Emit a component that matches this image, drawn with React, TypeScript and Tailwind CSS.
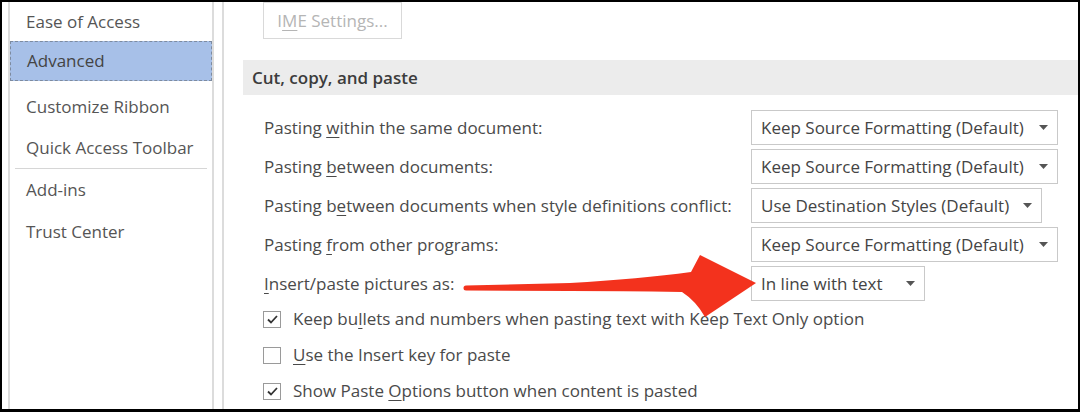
import React from "react";

const font = { fontFamily: '"Open Sans", "Noto Sans", sans-serif' };

const navTop = [
  { name: "Ease of Access", h: "h-[39px]" },
  { name: "Advanced", h: "h-[40px]", active: true },
];

const navMid = ["Customize Ribbon", "Quick Access Toolbar"];
const navBottom = ["Add-ins", "Trust Center"];

const U = ({ children }: { children: React.ReactNode }) => (
  <span className="underline underline-offset-[3px] decoration-1">{children}</span>
);

const Dropdown = ({ value, width }: { value: string; width: string }) => (
  <div
    className={`${width} h-[35px] border border-[#c9c9c9] bg-white flex items-center justify-between pl-[9px] pr-[9px]`}
  >
    <span className="text-[#444] whitespace-nowrap">{value}</span>
    <svg width="9" height="5" viewBox="0 0 9 5">
      <path d="M0 0 L9 0 L4.5 5 Z" fill="#555" />
    </svg>
  </div>
);

const Checkbox = ({ checked }: { checked: boolean }) => (
  <div className="w-[18px] h-[17px] border border-[#9a9a9a] bg-white flex items-center justify-center shrink-0">
    {checked && (
      <svg width="11" height="9" viewBox="0 0 11 9">
        <path d="M1 4.5 L4 7.5 L10 1" fill="none" stroke="#333" strokeWidth="1.8" />
      </svg>
    )}
  </div>
);

const rows: { label: React.ReactNode; value: string; width: string }[] = [
  {
    label: (
      <>
        Pasting <U>w</U>ithin the same document:
      </>
    ),
    value: "Keep Source Formatting (Default)",
    width: "w-[307px]",
  },
  {
    label: (
      <>
        Pasting <U>b</U>etween documents:
      </>
    ),
    value: "Keep Source Formatting (Default)",
    width: "w-[307px]",
  },
  {
    label: (
      <>
        Pasting b<U>e</U>tween documents when style definitions conflict:
      </>
    ),
    value: "Use Destination Styles (Default)",
    width: "w-[291px]",
  },
  {
    label: (
      <>
        Pasting <U>f</U>rom other programs:
      </>
    ),
    value: "Keep Source Formatting (Default)",
    width: "w-[307px]",
  },
  {
    label: (
      <>
        <U>I</U>nsert/paste pictures as:
      </>
    ),
    value: "In line with text",
    width: "w-[174px]",
  },
];

const checks: { label: React.ReactNode; checked: boolean }[] = [
  {
    label: (
      <>
        Keep bu<U>l</U>lets and numbers when pasting text with Keep Text Only option
      </>
    ),
    checked: true,
  },
  {
    label: (
      <>
        <U>U</U>se the Insert key for paste
      </>
    ),
    checked: false,
  },
  {
    label: (
      <>
        Show Paste <U>O</U>ptions button when content is pasted
      </>
    ),
    checked: true,
  },
];

export default function App() {
  return (
    <div className="relative w-[1080px] h-[412px] overflow-hidden text-[17px]" style={font}>
      <div className="h-full border-t-2 border-l-2 border-r-2 border-b-[3px] border-black bg-white flex">
        {/* Nav */}
        <div className="ml-[6px] w-[206px] border-l-2 border-r-2 border-[#dcdcdc] flex flex-col text-[#555]">
          {navTop.map((item) => (
            <div
              key={item.name}
              className={`${item.h} flex items-center pl-[16px] ${
                item.active ? "bg-[#a7c0e8] border border-dashed border-[#7d8ba0] pl-[15px] text-[#444]" : ""
              }`}
            >
              {item.name}
            </div>
          ))}
          <div className="h-[5px]" />
          {navMid.map((name) => (
            <div key={name} className="h-[41px] flex items-center pl-[16px]">
              {name}
            </div>
          ))}
          <div className="h-px bg-[#d6d6d6] mx-[5px]" />
          {navBottom.map((name) => (
            <div key={name} className="h-[42px] flex items-center pl-[16px]">
              {name}
            </div>
          ))}
        </div>

        {/* Content */}
        <div className="ml-[8px] flex-1 border-l-2 border-[#dcdcdc] pl-[19px] flex flex-col">
          <div className="ml-[20px] w-[139px] h-[38px] border border-[#d9d9d9] flex items-center justify-center text-[#b5b5b5]">
            I<U>M</U>E Settings...
          </div>

          <div className="mt-[21px] h-[37px] bg-[#ececec] flex items-center pl-[9px] font-semibold text-[#3c3c3c]">
            Cut, copy, and paste
          </div>

          <div className="mt-[15px] pl-[21px] flex flex-col gap-[4px] text-[#4a4a4a]">
            {rows.map((r, i) => (
              <div key={i} className="flex items-center">
                <div className="w-[487px] whitespace-nowrap">{r.label}</div>
                <Dropdown value={r.value} width={r.width} />
              </div>
            ))}
          </div>

          <div className="pl-[20px] flex flex-col text-[#4a4a4a]">
            {checks.map((c, i) => (
              <div key={i} className="h-[36px] flex items-center gap-[12px]">
                <Checkbox checked={c.checked} />
                <span className="whitespace-nowrap">{c.label}</span>
              </div>
            ))}
          </div>
        </div>
      </div>

      {/* Red annotation arrow */}
      <svg
        className="absolute inset-0 pointer-events-none"
        width="1080"
        height="412"
        viewBox="0 0 1080 412"
      >
        <path
          d="M 466 285.5 L 570 283 Q 640 279 691 272 L 700 255 L 756 283 L 705 317 Q 696 301 682 292 Q 620 291 570 291 L 466 290.5 A 2.5 2.5 0 0 1 466 285.5 Z"
          fill="#f3321d"
        />
      </svg>
    </div>
  );
}
